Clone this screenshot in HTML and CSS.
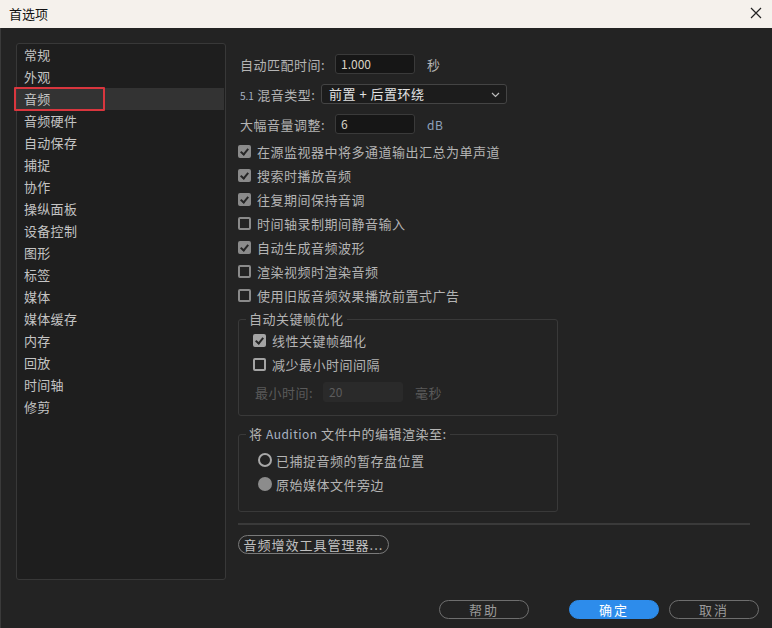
FILE: index.html
```html
<!DOCTYPE html>
<html lang="zh-CN">
<head>
    <meta charset="UTF-8">
    <title>首选项</title>
    <link rel="stylesheet" href="styles.css">
</head>
<body>
    <div class="window">
        <div class="titlebar">
            <span class="title">首选项</span>
            <svg class="close" width="12" height="12" viewBox="0 0 12 12">
                <path d="M1 1 L11 11 M11 1 L1 11" stroke="#222" stroke-width="1.2" fill="none"/>
            </svg>
        </div>

        <div class="content">
            <!-- category list -->
            <div class="sidebar">
                <div class="item">常规</div>
                <div class="item">外观</div>
                <div class="item selected">音频</div>
                <div class="item">音频硬件</div>
                <div class="item">自动保存</div>
                <div class="item">捕捉</div>
                <div class="item">协作</div>
                <div class="item">操纵面板</div>
                <div class="item">设备控制</div>
                <div class="item">图形</div>
                <div class="item">标签</div>
                <div class="item">媒体</div>
                <div class="item">媒体缓存</div>
                <div class="item">内存</div>
                <div class="item">回放</div>
                <div class="item">时间轴</div>
                <div class="item">修剪</div>
                <div class="highlight"></div>
            </div>

            <!-- audio settings -->
            <div class="main">
                <div class="row">
                    <span class="label wide">自动匹配时间:</span>
                    <span class="input w80">1.000</span>
                    <span class="unit">秒</span>
                </div>
                <div class="row">
                    <span class="label mix"><span class="small">5.1</span> 混音类型:</span>
                    <span class="select">前置 + 后置环绕
                        <svg class="chevron" width="9" height="6" viewBox="0 0 9 6">
                            <path d="M1 1 L4.5 4.5 L8 1" stroke="#bbb" stroke-width="1.2" fill="none"/>
                        </svg>
                    </span>
                </div>
                <div class="row">
                    <span class="label wide">大幅音量调整:</span>
                    <span class="input w80">6</span>
                    <span class="unit db">dB</span>
                </div>

                <div class="checks">
                    <div class="check on"><span class="box"></span>在源监视器中将多通道输出汇总为单声道</div>
                    <div class="check on"><span class="box"></span>搜索时播放音频</div>
                    <div class="check on"><span class="box"></span>往复期间保持音调</div>
                    <div class="check"><span class="box"></span>时间轴录制期间静音输入</div>
                    <div class="check on"><span class="box"></span>自动生成音频波形</div>
                    <div class="check"><span class="box"></span>渲染视频时渲染音频</div>
                    <div class="check"><span class="box"></span>使用旧版音频效果播放前置式广告</div>
                </div>

                <fieldset class="group keyframes">
                    <legend>自动关键帧优化</legend>
                    <div class="check on light"><span class="box"></span>线性关键帧细化</div>
                    <div class="check light"><span class="box"></span>减少最小时间间隔</div>
                    <div class="row dim">
                        <span class="label mintime">最小时间:</span>
                        <span class="input disabled">20</span>
                        <span class="unit">毫秒</span>
                    </div>
                </fieldset>

                <fieldset class="group render">
                    <legend>将 <span class="latin">Audition</span> 文件中的编辑渲染至:</legend>
                    <div class="radio"><span class="ring"></span>已捕捉音频的暂存盘位置</div>
                    <div class="radio"><span class="dot"></span>原始媒体文件旁边</div>
                </fieldset>

                <div class="separator"></div>
                <button class="pill plugin">音频增效工具管理器...</button>
            </div>
        </div>

        <div class="footer">
            <button class="pill help">帮助</button>
            <button class="pill primary">确定</button>
            <button class="pill">取消</button>
        </div>
    </div>
</body>
</html>
```

FILE: styles.css
```css
* {
    margin: 0;
    padding: 0;
    box-sizing: border-box;
}

body {
    font-family: "Noto Sans CJK SC", "Noto Sans", sans-serif;
    font-size: 13px;
    background: #232323;
    width: 772px;
    height: 628px;
    overflow: hidden;
}

.window {
    width: 772px;
    height: 628px;
    background: #232323;
    border-left: 1px solid #3a3a3a;
    display: flex;
    flex-direction: column;
}

.titlebar {
    height: 28px;
    background: #f5f1ec;
    display: flex;
    align-items: center;
    justify-content: space-between;
    padding: 0 10px 2px 9px;
    margin-left: -1px;
}

.title {
    color: #111;
    font-size: 13px;
}

.content {
    display: flex;
    padding: 15px 0 0 15px;
}

/* left list */
.sidebar {
    position: relative;
    width: 210px;
    height: 537px;
    background: #1e1e1e;
    border: 1px solid #383838;
    border-radius: 3px;
    flex-shrink: 0;
}

.item {
    height: 22px;
    line-height: 21px;
    padding-left: 7px;
    color: #c4c4c4;
    font-size: 13px;
    letter-spacing: 0.3px;
}

.item.selected {
    background: #333333;
    margin-right: 1px;
}

.highlight {
    position: absolute;
    left: -3px;
    top: 43px;
    width: 91px;
    height: 24px;
    border: 2px solid #d9363e;
    border-radius: 1px;
}

/* right side */
.main {
    width: 512px;
    margin-left: 12px;
    padding-top: 11px;
    color: #b4b4b4;
    letter-spacing: 0.5px;
}

.row {
    display: flex;
    align-items: center;
    height: 20px;
    margin-bottom: 10px;
}

.label {
    padding-left: 2px;
    flex-shrink: 0;
}

.label.wide {
    width: 97px;
}

.label.mix {
    width: 83px;
}

.label.mintime {
    width: 70px;
}

.small {
    font-size: 10px;
    color: #a8b4c4;
    letter-spacing: 0;
}

.input {
    height: 20px;
    line-height: 18px;
    background: #161616;
    border: 1px solid #3a3a3a;
    border-radius: 3px;
    padding-left: 5px;
    color: #d8d2c4;
    font-size: 12px;
    letter-spacing: 0;
}

.w80 {
    width: 80px;
}

.unit {
    margin-left: 12px;
}

.db {
    color: #8ea2bc;
    font-size: 12px;
}

.select {
    position: relative;
    width: 186px;
    height: 20px;
    line-height: 18px;
    background: #1c1c1c;
    border: 1px solid #444;
    border-radius: 3px;
    padding-left: 7px;
    color: #e2e2e2;
}

.chevron {
    position: absolute;
    right: 6px;
    top: 7px;
}

.checks {
    margin-top: -5px;
}

.check,
.radio {
    display: flex;
    align-items: center;
    height: 24px;
}

.box {
    width: 13px;
    height: 13px;
    border: 2px solid #8a8a8a;
    border-radius: 2px;
    margin-right: 6px;
    flex-shrink: 0;
    position: relative;
}

.check.on .box {
    background: #8c8c8c;
}

.check.on .box::after {
    content: "";
    position: absolute;
    left: 2px;
    top: 0;
    width: 3px;
    height: 6px;
    border-right: 2px solid #262626;
    border-bottom: 2px solid #262626;
    transform: rotate(40deg);
}

.check.light .box {
    border-color: #a4a4a4;
}

.check.on.light .box {
    background: #a4a4a4;
}

.group {
    width: 320px;
    border: 1px solid #393939;
    border-radius: 3px;
    padding: 0 16px 11px 14px;
}

.group legend {
    line-height: 16px;
    padding: 0 3px;
    color: #b4b4b4;
}

.keyframes {
    margin-top: 4px;
}

.keyframes legend {
    margin-left: -7px;
}

.keyframes .check:first-of-type {
    margin-top: 1px;
}

.row.dim {
    margin-top: 4px;
    margin-bottom: 0;
    height: 24px;
    color: #5a5a5a;
}

.input.disabled {
    width: 80px;
    background: #2a2a2a;
    border-color: #2a2a2a;
    color: #5c5c5c;
}

.render {
    margin-top: 10px;
    padding: 6px 16px 15px 19px;
}

.render legend {
    margin-left: -12px;
}

.latin {
    color: #a9b3c2;
    font-size: 12px;
}

.ring,
.dot {
    width: 14px;
    height: 14px;
    border-radius: 50%;
    margin-right: 4px;
    flex-shrink: 0;
}

.ring {
    border: 2px solid #a8a8a8;
}

.dot {
    background: #8c8c8c;
}

.separator {
    height: 2px;
    background: #3a3a3a;
    margin-top: 11px;
}

.pill {
    font-family: "Noto Sans CJK SC", "Noto Sans", sans-serif;
    font-size: 13px;
    height: 19px;
    line-height: 15px;
    border: 1.5px solid #7a7a7a;
    border-radius: 10px;
    background: transparent;
    color: #c0c0c0;
    letter-spacing: 1px;
}

.plugin {
    margin-top: 10px;
    width: 151px;
}

.footer {
    display: flex;
    justify-content: flex-end;
    gap: 10px;
    padding: 20px 13px 0 0;
}

.footer .pill {
    width: 90px;
    border-color: #6e6e6e;
    color: #9a9a9a;
    letter-spacing: 2px;
}

.footer .help {
    margin-right: 30px;
}

.footer .primary {
    background: #2d8ceb;
    border-color: #2d8ceb;
    color: #ffffff;
}
```
